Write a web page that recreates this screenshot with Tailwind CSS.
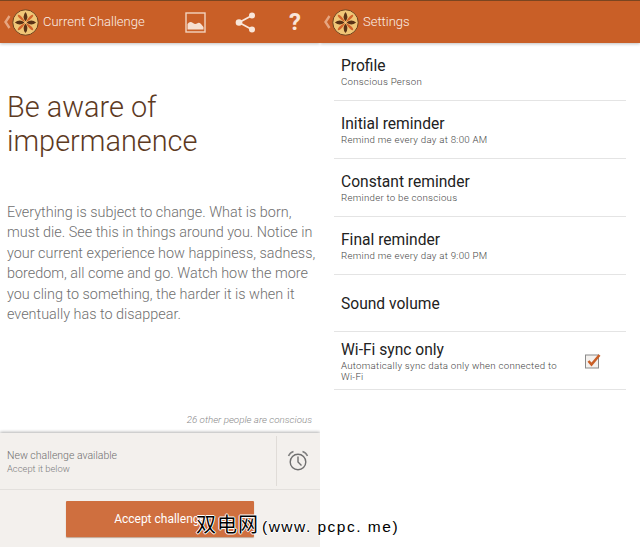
<!DOCTYPE html>
<html><head><meta charset="utf-8"><script src="https://cdn.jsdelivr.net/npm/@tailwindcss/browser@4"></script></head>
<body class="m-0 overflow-hidden">
<div class="relative w-[640px] h-[547px] bg-white flex font-['Roboto',sans-serif]">
  <!-- LEFT -->
  <section class="w-[320px] h-[547px] flex flex-col overflow-hidden">
    <header class="relative z-10 h-[43px] shrink-0 bg-[#c95f27] border-t border-[#7a4520] shadow-[0_1px_3px_rgba(0,0,0,0.25)] flex items-center text-white">
      <svg class="w-[8px] h-[14px] ml-[3px] mr-[1px] opacity-80" viewBox="0 0 8 14"><path d="M6.5 1 L2.500 7 L6.5 13" fill="none" stroke="#eeb898" stroke-width="2.4"/></svg>
      <svg class="w-[27px] h-[27px]" viewBox="0 0 28 28"><circle cx="14" cy="14" r="13.2" fill="#f0c677" stroke="#6b3f1d" stroke-width="1"/><path d="M14 14 Q5 9 6 6 Q9 5 14 14Z M14 14 Q23 9 22 6 Q19 5 14 14Z M14 14 Q5 19 6 22 Q9 23 14 14Z M14 14 Q23 19 22 22 Q19 23 14 14Z" fill="#d2622a"/><path d="M14 3 Q18 8 14 13 Q10 8 14 3Z M14 25 Q18 20 14 15 Q10 20 14 25Z M3 14 Q8 10 13 14 Q8 18 3 14Z M25 14 Q20 10 15 14 Q20 18 25 14Z" fill="#5a3216"/><circle cx="14" cy="14" r="1.200" fill="#f0c677"/></svg>
      <span class="ml-[4px] text-[13px] font-light text-[#fbeee6] whitespace-nowrap">Current Challenge</span>
      <svg class="absolute left-[185px] top-[11px] w-[21px] h-[21px]" viewBox="0 0 21 21"><rect x="1" y="1" width="19" height="19" fill="none" stroke="#f3d3bf" stroke-width="1.4"/><path d="M2.500 17.500 V12 Q5 8.500 8 11 Q10 12.500 12 11.500 Q14 10 16 12 L18.500 15 V17.500Z" fill="#f6dfd0"/></svg>
      <svg class="absolute left-[235px] top-[11px] w-[21px] h-[21px]" viewBox="0 0 21 21"><path d="M17 3.500 L4 10.500 L17 17.500" fill="none" stroke="#f9e6da" stroke-width="1.700"/><circle cx="17" cy="3.500" r="3" fill="#f9e6da"/><circle cx="4" cy="10.500" r="3.300" fill="#f9e6da"/><circle cx="17" cy="17.500" r="3" fill="#f9e6da"/></svg>
      <span class="absolute left-[289px] top-[5px] text-[24px] leading-[32px] font-bold text-[#f9e6da]">?</span>
    </header>
    <main class="flex-1 flex flex-col px-[7px] min-h-0">
      <h1 class="mt-[47px] text-[28.9px] leading-[34px] font-light text-[#5d3a1f]">Be aware of<br>impermanence</h1>
      <p class="mt-[45px] text-[14.4px] leading-[20.4px] font-light text-[#6f6f6f] w-[312px] whitespace-nowrap">Everything is subject to change. What is born,<br>must die. See this in things around you. Notice in<br>your current experience how happiness, sadness,<br>boredom, all come and go. Watch how the more<br>you cling to something, the harder it is when it<br>eventually has to disappear.</p>
      <div class="mt-auto mb-[7px] text-right pr-[1px] text-[9.8px] leading-[12px] italic font-light text-[#8a8a8a]">26 other people are conscious</div>
    </main>
    <div class="h-[114px] shrink-0 bg-[#f3f0ed] shadow-[0_-1px_3px_rgba(0,0,0,0.3)] relative">
      <div class="h-[57px] border-b border-[#e3e0dd] flex items-center">
        <div class="flex-1 pl-[7px] pt-[1px]">
          <div class="text-[10.5px] leading-[15px] font-light text-[#6f6f6f]">New challenge available</div>
          <div class="text-[9.4px] leading-[12px] font-light text-[#7d7d7d]">Accept it below</div>
        </div>
        <div class="w-[44px] h-[50px] border-l border-[#e0dcd8] flex items-center justify-center pr-[2px]">
          <svg class="w-[22px] h-[22px]" viewBox="0 0 22 22"><circle cx="11" cy="12" r="7.800" fill="none" stroke="#6f6f6f" stroke-width="1.400"/><path d="M11 6.500 V12 L14.500 15.500" fill="none" stroke="#6f6f6f" stroke-width="1.400"/><path d="M1.500 6 Q3 2.500 6.500 1.500 M20.500 6 Q19 2.500 15.500 1.500" fill="none" stroke="#7f7f7f" stroke-width="1.500"/></svg>
        </div>
      </div>
      <div class="flex justify-center pt-[11px]">
        <button class="w-[188px] h-[36px] bg-[#cf6f3f] rounded-[1px] shadow-[0_1px_1px_rgba(120,60,20,0.4)] text-white text-[12px] font-normal text-center">Accept challenge</button>
      </div>
    </div>
  </section>
  <!-- RIGHT -->
  <section class="w-[320px] h-[547px] flex flex-col overflow-hidden">
    <header class="relative z-10 h-[43px] shrink-0 bg-[#c95f27] border-t border-[#7a4520] shadow-[0_1px_3px_rgba(0,0,0,0.25)] flex items-center text-white">
      <svg class="w-[8px] h-[14px] ml-[3px] mr-[1px] opacity-80" viewBox="0 0 8 14"><path d="M6.5 1 L2.500 7 L6.5 13" fill="none" stroke="#eeb898" stroke-width="2.4"/></svg>
      <svg class="w-[27px] h-[27px]" viewBox="0 0 28 28"><circle cx="14" cy="14" r="13.2" fill="#f0c677" stroke="#6b3f1d" stroke-width="1"/><path d="M14 14 Q5 9 6 6 Q9 5 14 14Z M14 14 Q23 9 22 6 Q19 5 14 14Z M14 14 Q5 19 6 22 Q9 23 14 14Z M14 14 Q23 19 22 22 Q19 23 14 14Z" fill="#d2622a"/><path d="M14 3 Q18 8 14 13 Q10 8 14 3Z M14 25 Q18 20 14 15 Q10 20 14 25Z M3 14 Q8 10 13 14 Q8 18 3 14Z M25 14 Q20 10 15 14 Q20 18 25 14Z" fill="#5a3216"/><circle cx="14" cy="14" r="1.200" fill="#f0c677"/></svg>
      <span class="ml-[4px] text-[13px] font-light text-[#fbeee6]">Settings</span>
    </header>
    <ul class="mx-[14px] flex flex-col text-[#222]">
      <li class="h-[58px] border-b border-[#e4e4e4] px-[7px] flex flex-col justify-center pt-[1px]"><div class="text-[15.6px] leading-[20px]">Profile</div><div class="text-[9.7px] leading-[12px] font-light text-[#444] tracking-[0.25px]">Conscious Person</div></li>
      <li class="h-[58px] border-b border-[#e4e4e4] px-[7px] flex flex-col justify-center pt-[1px]"><div class="text-[15.6px] leading-[20px]">Initial reminder</div><div class="text-[9.7px] leading-[12px] font-light text-[#444] tracking-[0.25px]">Remind me every day at 8:00 AM</div></li>
      <li class="h-[58px] border-b border-[#e4e4e4] px-[7px] flex flex-col justify-center pt-[1px]"><div class="text-[15.6px] leading-[20px]">Constant reminder</div><div class="text-[9.7px] leading-[12px] font-light text-[#444] tracking-[0.25px]">Reminder to be conscious</div></li>
      <li class="h-[58px] border-b border-[#e4e4e4] px-[7px] flex flex-col justify-center pt-[1px]"><div class="text-[15.6px] leading-[20px]">Final reminder</div><div class="text-[9.7px] leading-[12px] font-light text-[#444] tracking-[0.25px]">Remind me every day at 9:00 PM</div></li>
      <li class="h-[57px] border-b border-[#e4e4e4] px-[7px] flex flex-col justify-center pt-[1px]"><div class="text-[15.6px] leading-[20px]">Sound volume</div></li>
      <li class="h-[58px] border-b border-[#e4e4e4] pl-[7px] flex items-center">
        <div class="w-[222px]"><div class="text-[15.6px] leading-[20px]">Wi-Fi sync only</div><div class="text-[9.7px] leading-[11px] font-light text-[#444] tracking-[0.25px]">Automatically sync data only when connected to Wi-Fi</div></div>
        <svg class="ml-[21px] w-[18px] h-[18px]" viewBox="0 0 18 18"><rect x="1.500" y="3" width="13" height="13" fill="#f4f1ee" stroke="#8a8a8a" stroke-width="1"/><path d="M4.500 9 L7.500 12.500 L15.500 3" fill="none" stroke="#c95f27" stroke-width="2.600"/></svg>
      </li>
    </ul>
  </section>
  <div class="absolute left-[196px] top-[512px] flex items-baseline whitespace-nowrap text-[20px] leading-[24px] font-['Noto_Sans_CJK_SC',sans-serif] text-black [text-shadow:-1px_0_0_#fff,1px_0_0_#fff,0_-1px_0_#fff,0_1px_0_#fff]"><span class="tracking-[1px]">双电网</span><span class="font-['Liberation_Sans',sans-serif] text-[15.5px] tracking-[1.5px] ml-[3px]">(www. pcpc. me)</span></div>
</div>
</body></html>
